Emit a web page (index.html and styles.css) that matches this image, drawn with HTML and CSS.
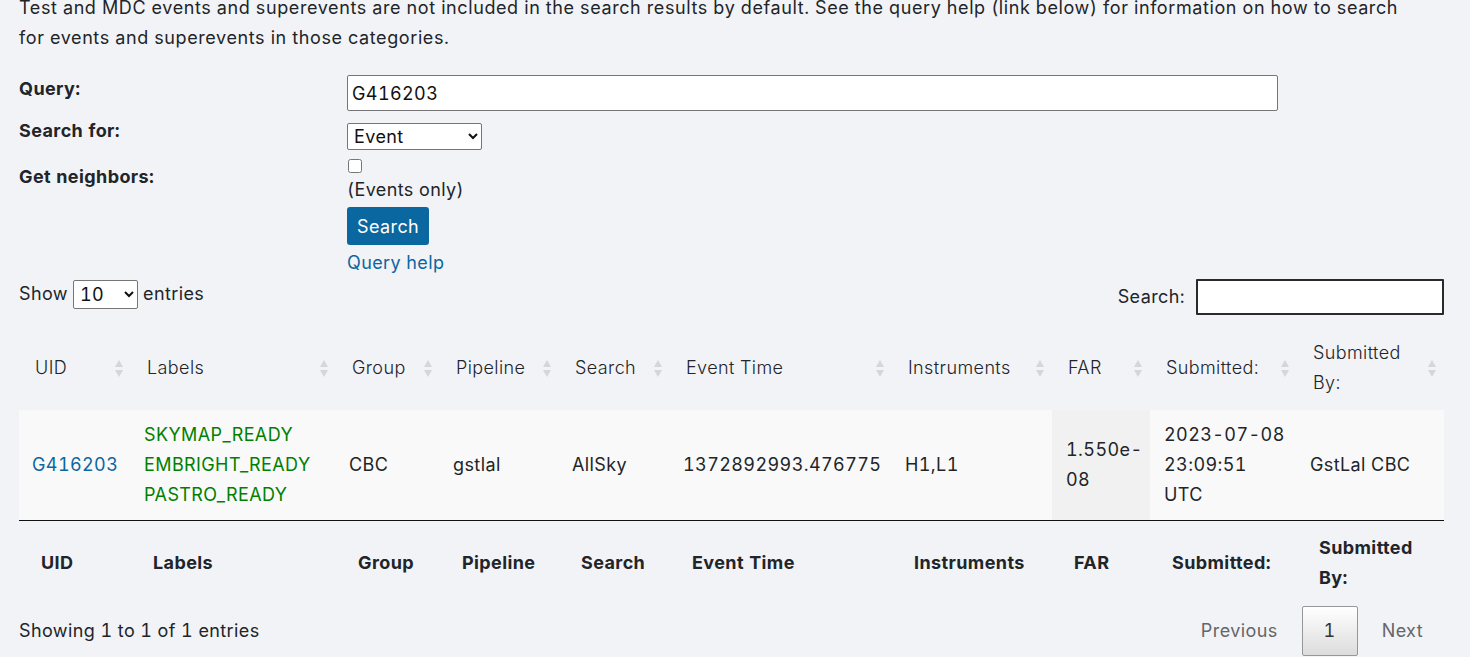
FILE: index.html
```html
<!DOCTYPE html>
<html lang="en">
<head>
<meta charset="utf-8">
<title>Search</title>
<link rel="stylesheet" href="styles.css">
</head>
<body>
<div class="page">
  <p class="intro">Test and MDC events and superevents are not included in the search results by default. See the query help (link below) for information on how to search for events and superevents in those categories.</p>

  <form class="query-form">
    <div class="frow row-query">
      <label class="flabel">Query:</label>
      <div class="fctl"><input class="q-input" type="text" value="G416203"></div>
    </div>
    <div class="frow row-type">
      <label class="flabel">Search for:</label>
      <div class="fctl"><select class="type-select"><option>Event</option><option>Superevent</option></select></div>
    </div>
    <div class="frow row-neigh">
      <label class="flabel">Get neighbors:</label>
      <div class="fctl fcol">
        <input class="neigh-check" type="checkbox">
        <span class="hint">(Events only)</span>
        <button class="btn-search" type="button">Search</button>
        <a class="help-link" href="#">Query help</a>
      </div>
    </div>
  </form>

  <div class="dt-controls">
    <div class="dt-length">Show <select class="len-select"><option>10</option><option>25</option></select> entries</div>
    <div class="dt-filter"><span>Search:</span><input class="filter-input" type="search"></div>
  </div>

  <table class="dt">
    <colgroup>
      <col class="c-uid"><col class="c-labels"><col class="c-group"><col class="c-pipe"><col class="c-search"><col class="c-time"><col class="c-inst"><col class="c-far"><col class="c-sub"><col class="c-by">
    </colgroup>
    <thead>
      <tr>
        <th class="sortable">UID</th>
        <th class="sortable">Labels</th>
        <th class="sortable">Group</th>
        <th class="sortable">Pipeline</th>
        <th class="sortable">Search</th>
        <th class="sortable">Event Time</th>
        <th class="sortable">Instruments</th>
        <th class="sortable">FAR</th>
        <th class="sortable">Submitted:</th>
        <th class="sortable">Submitted By:</th>
      </tr>
    </thead>
    <tbody>
      <tr>
        <td><a class="uid-link" href="#">G416203</a></td>
        <td><span class="lbl">SKYMAP_READY</span><span class="lbl">EMBRIGHT_READY</span><span class="lbl">PASTRO_READY</span></td>
        <td>CBC</td>
        <td>gstlal</td>
        <td>AllSky</td>
        <td>1372892993.476775</td>
        <td>H1,L1</td>
        <td class="sorted">1.550e-08</td>
        <td class="sub-cell"><span class="nowrap">2023-07-08</span> <span class="nowrap">23:09:51</span> UTC</td>
        <td>GstLal CBC</td>
      </tr>
    </tbody>
    <tfoot>
      <tr>
        <th>UID</th>
        <th>Labels</th>
        <th>Group</th>
        <th>Pipeline</th>
        <th>Search</th>
        <th>Event Time</th>
        <th>Instruments</th>
        <th>FAR</th>
        <th>Submitted:</th>
        <th>Submitted By:</th>
      </tr>
    </tfoot>
  </table>

  <div class="dt-bottom">
    <div class="dt-info">Showing 1 to 1 of 1 entries</div>
    <div class="dt-paginate">
      <a class="pg pg-prev">Previous</a>
      <a class="pg pg-current">1</a>
      <a class="pg pg-next">Next</a>
    </div>
  </div>
</div>
</body>
</html>
```

FILE: styles.css
```css
* { box-sizing: border-box; }

html, body {
  margin: 0;
  padding: 0;
  background: #f2f3f7;
}

body {
  font-family: Inter, "Noto Sans", sans-serif;
  font-size: 18px;
  line-height: 30px;
  letter-spacing: 0.4px;
  font-feature-settings: "tnum" 1;
  color: #212529;
  overflow: hidden;
}

.page {
  width: 1425px;
  margin-left: 19px;
}

.intro {
  margin: -7px 0 0 0;
  max-width: 1385px;
  letter-spacing: 0.6px;
}

.nowrap { white-space: nowrap; }

/* form */
.frow {
  display: flex;
  align-items: flex-start;
}
.flabel {
  width: 328px;
  flex: none;
  font-weight: 700;
}
.row-query { margin-top: 21px; }
.row-type { margin-top: 5px; }
.row-neigh { margin-top: 6px; }
.row-neigh .flabel { margin-top: 6px; }

.q-input {
  display: block;
  margin-top: 1px;
  width: 931px;
  height: 36px;
  border: 1px solid #767676;
  border-radius: 2px;
  background: #fff;
  font: inherit;
  letter-spacing: inherit;
  color: #111;
  padding: 0 4px;
}

.type-select {
  display: block;
  margin-top: 7px;
  width: 135px;
  height: 27px;
  font: inherit;
  letter-spacing: inherit;
  line-height: 25px;
  color: #111;
  border: 1px solid #767676;
  border-radius: 2px;
  background-color: #fff;
  padding: 0 2px;
}

.fcol {
  display: flex;
  flex-direction: column;
  align-items: flex-start;
}
.neigh-check {
  width: 14px;
  height: 14px;
  margin: 3px 0 2px 1px;
}
.hint { display: block; }
.btn-search {
  margin-top: 2px;
  height: 38px;
  padding: 0 10px;
  border: none;
  border-radius: 3px;
  background: #0b67a0;
  color: #fff;
  font: inherit;
  letter-spacing: inherit;
  line-height: 40px;
}
.help-link {
  display: block;
  margin-top: 3px;
  color: #0b67a0;
  text-decoration: none;
}

/* datatable controls */
.dt-controls {
  margin-top: 1px;
  display: flex;
  justify-content: space-between;
  align-items: flex-start;
  height: 36px;
}
.dt-length {
  display: flex;
  align-items: center;
  gap: 5px;
  height: 30px;
}
.len-select {
  width: 65px;
  height: 29px;
  font: inherit;
  letter-spacing: inherit;
  line-height: 27px;
  color: #111;
  border: 1px solid #767676;
  border-radius: 2px;
  background-color: #fff;
  padding: 0 2px;
}
.dt-filter {
  display: flex;
  align-items: center;
  gap: 11px;
}
.filter-input {
  width: 248px;
  height: 36px;
  border: 2px solid #2a2a2a;
  border-radius: 1px;
  background: #fff;
  font: inherit;
  padding: 0 4px;
}

/* table */
.dt {
  margin-top: 15px;
  width: 1425px;
  table-layout: fixed;
  border-collapse: separate;
  border-spacing: 0;
}
.c-uid { width: 112px; }
.c-labels { width: 205px; }
.c-group { width: 104px; }
.c-pipe { width: 119px; }
.c-search { width: 111px; }
.c-time { width: 222px; }
.c-inst { width: 160px; }
.c-far { width: 98px; }
.c-sub { width: 147px; }
.c-by { width: 147px; }

.dt th, .dt td {
  text-align: left;
  vertical-align: middle;
  line-height: 30px;
}

.dt thead th {
  position: relative;
  padding: 8px 30px 12px 16px;
  font-weight: 300;
}
.sortable::before,
.sortable::after {
  content: "";
  position: absolute;
  right: 8px;
  width: 0;
  height: 0;
  border-left: 4px solid transparent;
  border-right: 4px solid transparent;
}
.sortable::before {
  top: calc(50% - 10px);
  border-bottom: 7px solid #d6d6d6;
}
.sortable::after {
  top: calc(50% + 0px);
  border-top: 7px solid #d6d6d6;
}

.dt tbody td {
  padding: 10px 13px;
  background: #f9f9f9;
}
.dt tbody td.sorted {
  background: #f1f1f1;
  padding-left: 14px;
}
.dt tbody td.sub-cell {
  padding-left: 14px;
  padding-right: 8px;
}
.uid-link {
  color: #0b67a0;
  text-decoration: none;
}
.lbl {
  display: block;
  color: #008000;
}

.dt tfoot th {
  padding: 12px 18px 12px 22px;
  border-top: 1px solid #111;
  font-weight: 700;
}

/* bottom */
.dt-bottom {
  display: flex;
  justify-content: space-between;
  align-items: center;
  padding-top: 1px;
}
.dt-paginate {
  display: flex;
  align-items: center;
}
.pg {
  display: block;
  line-height: 30px;
  padding: 9px 18px;
  border: 1px solid transparent;
  color: #666;
}
.pg-prev { padding-right: 23px; }
.pg-current {
  padding: 9px 21px;
  color: #333;
  border: 1px solid #979797;
  border-radius: 2px;
  background: linear-gradient(to bottom, #fff 0%, #dcdcdc 100%);
}
.pg-next { padding-left: 23px; padding-right: 20px; }
```
